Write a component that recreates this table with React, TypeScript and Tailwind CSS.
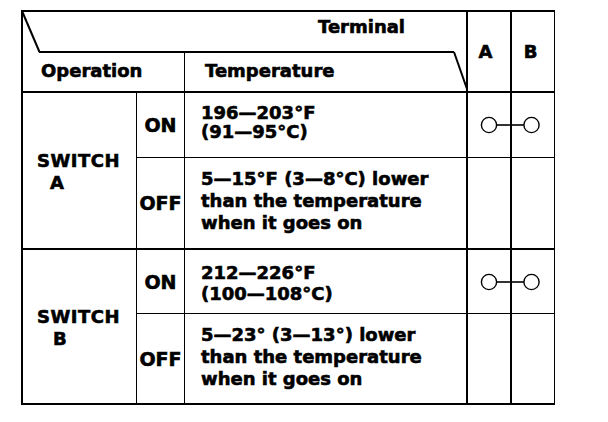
import React from "react";

function Connector({ side }: { side: "a" | "b" }) {
  if (side === "a") {
    return (
      <svg width="42" height="20" className="block">
        <line x1="28" y1="10" x2="42" y2="10" stroke="black" strokeWidth="1.6" />
        <circle cx="21" cy="10" r="7.6" fill="white" stroke="black" strokeWidth="1.4" />
      </svg>
    );
  }
  return (
    <svg width="42" height="20" className="block">
      <line x1="0" y1="10" x2="12" y2="10" stroke="black" strokeWidth="1.6" />
      <circle cx="19.5" cy="10" r="7.6" fill="white" stroke="black" strokeWidth="1.4" />
    </svg>
  );
}

export default function App() {
  return (
    <div className="w-[608px] h-[422px] bg-white pt-[10px] pl-[21px] font-['DejaVu_Sans',sans-serif] font-bold text-black text-[18px] [-webkit-text-stroke:0.6px_black]">
      <div className="grid w-[534px] grid-cols-[113px_48px_282px_44px_44px] grid-rows-[81px_65px_92px_64px_89px] border-t-2 border-l-2 border-r border-b-2 border-black">
        {/* Header */}
        <div className="relative col-span-3 flex flex-col border-b-2 border-black">
          <div className="h-[39px] pl-[295px] pt-[5px] leading-[20px]">Terminal</div>
          <div className="flex flex-1 ml-[16px] mr-[12px] border-t-2 border-black leading-[20px]">
            <div className="w-[145px] pl-[2px] pt-[8px]">Operation</div>
            <div className="flex-1 border-l border-black pl-[20px] pt-[8px]">Temperature</div>
          </div>
          <svg className="absolute left-0 top-0 overflow-visible" width="443" height="79">
            <line x1="-1" y1="-1" x2="16.5" y2="40" stroke="black" strokeWidth="2" />
            <line x1="431" y1="40" x2="444" y2="77" stroke="black" strokeWidth="2" />
          </svg>
        </div>
        <div className="flex items-center justify-center border-l-2 border-b-2 border-black pr-[7px] leading-[20px]">A</div>
        <div className="flex items-center justify-center border-l-2 border-b-2 border-black pr-[5px] leading-[20px]">B</div>

        {/* Switch A */}
        <div className="row-span-2 flex flex-col justify-center border-b-2 border-black pl-[14px] pt-[2px] leading-[22px]">
          <span className="tracking-[0.5px]">SWITCH</span>
          <span className="pl-[13px]">A</span>
        </div>
        <div className="flex items-center justify-center border-l border-b border-black text-[19px] leading-[20px]">ON</div>
        <div className="border-l border-b border-black pl-[16px] pt-[10px] leading-[19px]">
          <div>196—203°F</div>
          <div>(91—95°C)</div>
        </div>
        <div className="flex items-center border-l-2 border-b border-black">
          <Connector side="a" />
        </div>
        <div className="flex items-center border-l-2 border-b border-black">
          <Connector side="b" />
        </div>

        <div className="flex items-center justify-center border-l border-b-2 border-black text-[19px] leading-[20px]">OFF</div>
        <div className="border-l border-b-2 border-black pl-[16px] pt-[10px] leading-[22px]">
          <div>5—15°F (3—8°C) lower</div>
          <div>than the temperature</div>
          <div>when it goes on</div>
        </div>
        <div className="border-l-2 border-b-2 border-black" />
        <div className="border-l-2 border-b-2 border-black" />

        {/* Switch B */}
        <div className="row-span-2 flex flex-col justify-center pl-[14px] pt-[2px] leading-[22px]">
          <span className="tracking-[0.5px]">SWITCH</span>
          <span className="pl-[16px]">B</span>
        </div>
        <div className="flex items-center justify-center border-l border-b border-black text-[19px] leading-[20px]">ON</div>
        <div className="border-l border-b border-black pl-[16px] pt-[12px] leading-[21px]">
          <div>212—226°F</div>
          <div>(100—108°C)</div>
        </div>
        <div className="flex items-center border-l-2 border-b border-black">
          <Connector side="a" />
        </div>
        <div className="flex items-center border-l-2 border-b border-black">
          <Connector side="b" />
        </div>

        <div className="flex items-center justify-center border-l border-black text-[19px] leading-[20px]">OFF</div>
        <div className="border-l border-black pl-[16px] pt-[10px] leading-[22px]">
          <div>5—23° (3—13°) lower</div>
          <div>than the temperature</div>
          <div>when it goes on</div>
        </div>
        <div className="border-l-2 border-black" />
        <div className="border-l-2 border-black" />
      </div>
    </div>
  );
}
